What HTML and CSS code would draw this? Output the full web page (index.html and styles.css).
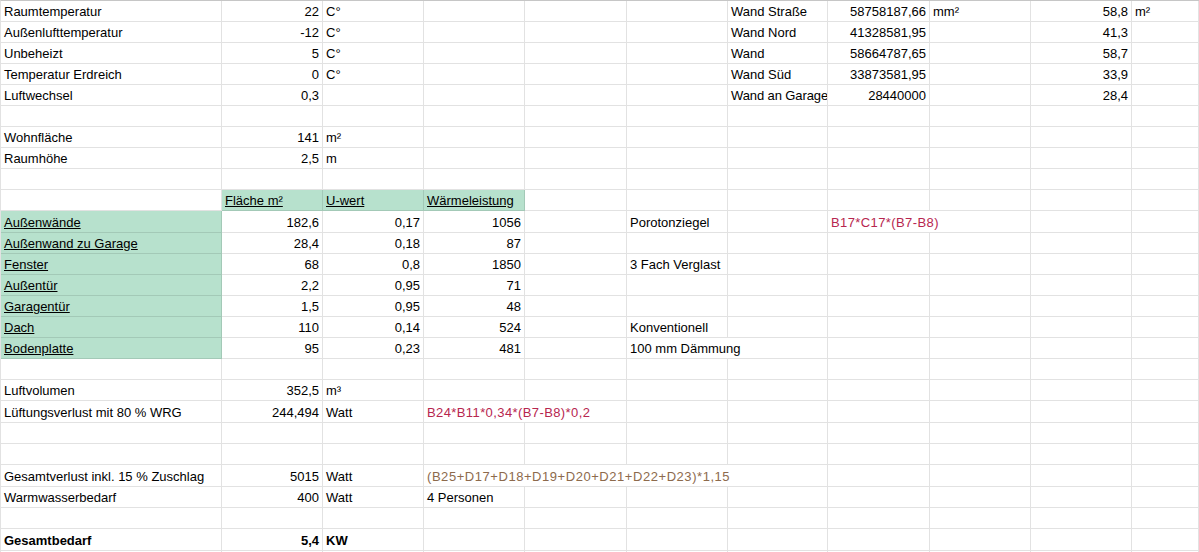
FILE: index.html
```html
<!DOCTYPE html>
<html lang="de">
<head>
<meta charset="utf-8">
<title>Heizlast</title>
<link rel="stylesheet" href="styles.css">
</head>
<body>
<div class="sheet">
  <div class="row"><div class="c">Raumtemperatur</div><div class="c n">22</div><div class="c">C°</div><div class="c"></div><div class="c"></div><div class="c"></div><div class="c">Wand Straße</div><div class="c n">58758187,66</div><div class="c">mm²</div><div class="c n">58,8</div><div class="c">m²</div></div>
  <div class="row"><div class="c">Außenlufttemperatur</div><div class="c n">-12</div><div class="c">C°</div><div class="c"></div><div class="c"></div><div class="c"></div><div class="c">Wand Nord</div><div class="c n">41328581,95</div><div class="c"></div><div class="c n">41,3</div><div class="c"></div></div>
  <div class="row"><div class="c">Unbeheizt</div><div class="c n">5</div><div class="c">C°</div><div class="c"></div><div class="c"></div><div class="c"></div><div class="c">Wand</div><div class="c n">58664787,65</div><div class="c"></div><div class="c n">58,7</div><div class="c"></div></div>
  <div class="row"><div class="c">Temperatur Erdreich</div><div class="c n">0</div><div class="c">C°</div><div class="c"></div><div class="c"></div><div class="c"></div><div class="c">Wand Süd</div><div class="c n">33873581,95</div><div class="c"></div><div class="c n">33,9</div><div class="c"></div></div>
  <div class="row"><div class="c">Luftwechsel</div><div class="c n">0,3</div><div class="c"></div><div class="c"></div><div class="c"></div><div class="c"></div><div class="c tight">Wand an Garage</div><div class="c n">28440000</div><div class="c"></div><div class="c n">28,4</div><div class="c"></div></div>
  <div class="row"><div class="c"></div><div class="c"></div><div class="c"></div><div class="c"></div><div class="c"></div><div class="c"></div><div class="c"></div><div class="c"></div><div class="c"></div><div class="c"></div><div class="c"></div></div>
  <div class="row"><div class="c">Wohnfläche</div><div class="c n">141</div><div class="c">m²</div><div class="c"></div><div class="c"></div><div class="c"></div><div class="c"></div><div class="c"></div><div class="c"></div><div class="c"></div><div class="c"></div></div>
  <div class="row"><div class="c">Raumhöhe</div><div class="c n">2,5</div><div class="c">m</div><div class="c"></div><div class="c"></div><div class="c"></div><div class="c"></div><div class="c"></div><div class="c"></div><div class="c"></div><div class="c"></div></div>
  <div class="row"><div class="c"></div><div class="c"></div><div class="c"></div><div class="c"></div><div class="c"></div><div class="c"></div><div class="c"></div><div class="c"></div><div class="c"></div><div class="c"></div><div class="c"></div></div>
  <div class="row"><div class="c"></div><div class="c g u">Fläche m²</div><div class="c g u">U-wert</div><div class="c g u">Wärmeleistung</div><div class="c"></div><div class="c"></div><div class="c"></div><div class="c"></div><div class="c"></div><div class="c"></div><div class="c"></div></div>
  <div class="row tall"><div class="c g u">Außenwände</div><div class="c n">182,6</div><div class="c n">0,17</div><div class="c n">1056</div><div class="c"></div><div class="c">Porotonziegel</div><div class="c"></div><div class="c s2 red">B17*C17*(B7-B8)</div><div class="c n"></div><div class="c"></div></div>
  <div class="row"><div class="c g u">Außenwand zu Garage</div><div class="c n">28,4</div><div class="c n">0,18</div><div class="c n">87</div><div class="c"></div><div class="c"></div><div class="c"></div><div class="c"></div><div class="c"></div><div class="c"></div><div class="c"></div></div>
  <div class="row"><div class="c g u">Fenster</div><div class="c n">68</div><div class="c n">0,8</div><div class="c n">1850</div><div class="c"></div><div class="c">3 Fach Verglast</div><div class="c"></div><div class="c"></div><div class="c"></div><div class="c"></div><div class="c"></div></div>
  <div class="row"><div class="c g u">Außentür</div><div class="c n">2,2</div><div class="c n">0,95</div><div class="c n">71</div><div class="c"></div><div class="c"></div><div class="c"></div><div class="c"></div><div class="c"></div><div class="c"></div><div class="c"></div></div>
  <div class="row"><div class="c g u">Garagentür</div><div class="c n">1,5</div><div class="c n">0,95</div><div class="c n">48</div><div class="c"></div><div class="c"></div><div class="c"></div><div class="c"></div><div class="c"></div><div class="c"></div><div class="c"></div></div>
  <div class="row"><div class="c g u">Dach</div><div class="c n">110</div><div class="c n">0,14</div><div class="c n">524</div><div class="c"></div><div class="c">Konventionell</div><div class="c"></div><div class="c"></div><div class="c"></div><div class="c"></div><div class="c"></div></div>
  <div class="row"><div class="c g u">Bodenplatte</div><div class="c n">95</div><div class="c n">0,23</div><div class="c n">481</div><div class="c"></div><div class="c s2">100 mm Dämmung</div><div class="c"></div><div class="c"></div><div class="c"></div><div class="c"></div></div>
  <div class="row"><div class="c"></div><div class="c"></div><div class="c"></div><div class="c"></div><div class="c"></div><div class="c"></div><div class="c"></div><div class="c"></div><div class="c"></div><div class="c"></div><div class="c"></div></div>
  <div class="row"><div class="c">Luftvolumen</div><div class="c n">352,5</div><div class="c">m³</div><div class="c"></div><div class="c"></div><div class="c"></div><div class="c"></div><div class="c"></div><div class="c"></div><div class="c"></div><div class="c"></div></div>
  <div class="row tall"><div class="c">Lüftungsverlust mit 80 % WRG</div><div class="c n">244,494</div><div class="c">Watt</div><div class="c s2 red">B24*B11*0,34*(B7-B8)*0,2</div><div class="c"></div><div class="c"></div><div class="c"></div><div class="c"></div><div class="c"></div><div class="c"></div></div>
  <div class="row"><div class="c"></div><div class="c"></div><div class="c"></div><div class="c"></div><div class="c"></div><div class="c"></div><div class="c"></div><div class="c"></div><div class="c"></div><div class="c"></div><div class="c"></div></div>
  <div class="row"><div class="c"></div><div class="c"></div><div class="c"></div><div class="c"></div><div class="c"></div><div class="c"></div><div class="c"></div><div class="c"></div><div class="c"></div><div class="c"></div><div class="c"></div></div>
  <div class="row tall"><div class="c">Gesamtverlust inkl. 15 % Zuschlag</div><div class="c n">5015</div><div class="c">Watt</div><div class="c s4 brown">(B25+D17+D18+D19+D20+D21+D22+D23)*1,15</div><div class="c"></div><div class="c"></div><div class="c"></div><div class="c"></div></div>
  <div class="row"><div class="c">Warmwasserbedarf</div><div class="c n">400</div><div class="c">Watt</div><div class="c">4 Personen</div><div class="c"></div><div class="c"></div><div class="c"></div><div class="c"></div><div class="c"></div><div class="c"></div><div class="c"></div></div>
  <div class="row"><div class="c"></div><div class="c"></div><div class="c"></div><div class="c"></div><div class="c"></div><div class="c"></div><div class="c"></div><div class="c"></div><div class="c"></div><div class="c"></div><div class="c"></div></div>
  <div class="row tall bold"><div class="c">Gesamtbedarf</div><div class="c n">5,4</div><div class="c">KW</div><div class="c"></div><div class="c"></div><div class="c"></div><div class="c"></div><div class="c"></div><div class="c"></div><div class="c"></div><div class="c"></div></div>
  <div class="row"><div class="c"></div><div class="c"></div><div class="c"></div><div class="c"></div><div class="c"></div><div class="c"></div><div class="c"></div><div class="c"></div><div class="c"></div><div class="c"></div><div class="c"></div></div>
</div>
</body>
</html>
```

FILE: styles.css
```css
html, body {
  margin: 0;
  padding: 0;
  background: #ffffff;
  overflow: hidden;
}

.sheet {
  width: 1199px;
  border-top: 1px solid #c6c6c6;
  border-left: 1px solid #e2e2e2;
  box-sizing: border-box;
  font-family: "Liberation Sans", Arial, sans-serif;
  font-size: 13px;
  color: #000000;
}

.row {
  display: grid;
  grid-template-columns: 221px 101px 101px 101px 102px 101px 100px 102px 101px 101px 1fr;
  height: 21px;
}

.row.tall {
  height: 22px;
}

.c {
  box-sizing: border-box;
  border-right: 1px solid #e2e2e2;
  border-bottom: 1px solid #e2e2e2;
  display: flex;
  align-items: flex-end;
  padding: 0 3px 2px 3px;
  line-height: 15px;
  white-space: nowrap;
  overflow: hidden;
  min-width: 0;
}

.c.tight {
  padding-right: 0;
  letter-spacing: -0.1px;
}

.n {
  justify-content: flex-end;
}

.g {
  background: #b7e1cd;
  border-right-color: #a3c9b7;
  border-bottom-color: #a3c9b7;
}

.u {
  text-decoration: underline;
}

.s2 {
  grid-column: span 2;
}

.s4 {
  grid-column: span 4;
}

.red {
  color: #b7264f;
  letter-spacing: 0.4px;
}

.brown {
  color: #8d6a4c;
  letter-spacing: 0.55px;
}

.bold {
  font-weight: bold;
}
```
